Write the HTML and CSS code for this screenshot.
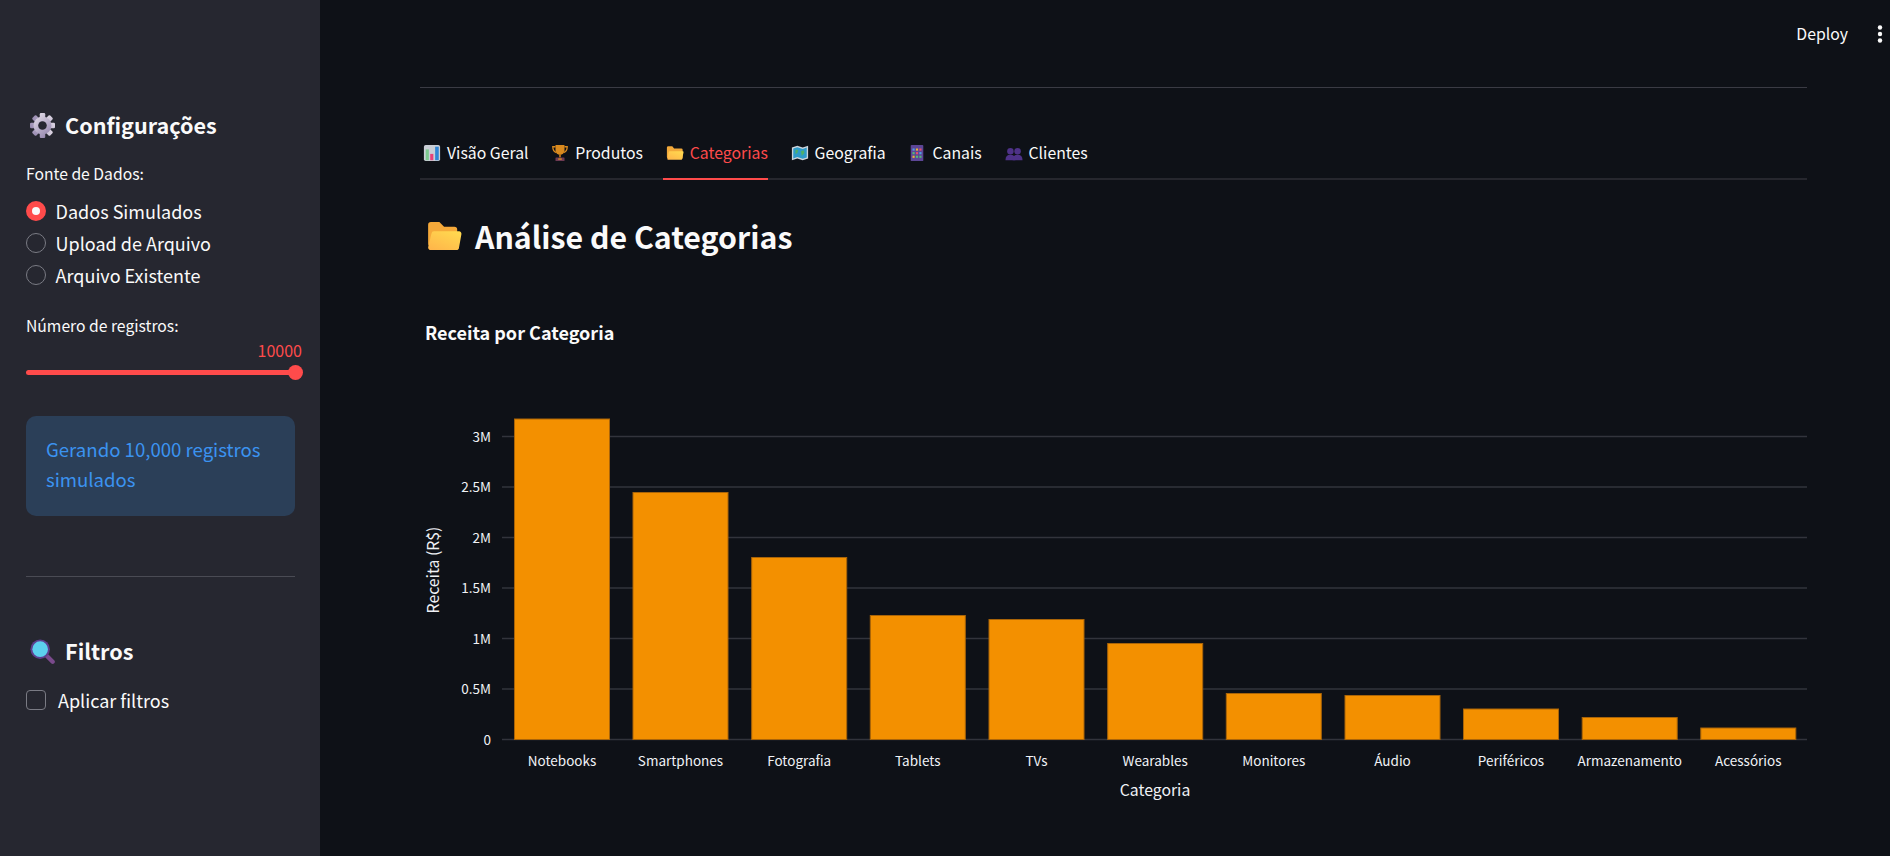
FILE: index.html
```html
<!DOCTYPE html>
<html lang="pt">
<head>
<meta charset="utf-8">
<title>Análise de Categorias</title>
<link rel="stylesheet" href="styles.css">
</head>
<body>
<div class="app">
  <aside class="sidebar">
    <h2 class="side-title">
      <svg class="side-emoji" viewBox="-16 -16 32 32"><defs><linearGradient id="g1" gradientUnits="userSpaceOnUse" x1="-12" y1="-14" x2="12" y2="14"><stop offset="0" stop-color="#e8e2ec"/><stop offset="1" stop-color="#8d7ea8"/></linearGradient></defs><g fill="url(#g1)"><rect x="-3.500" y="-16" width="7" height="32" rx="1.500"/><rect x="-3.500" y="-16" width="7" height="32" rx="1.500" transform="rotate(45)"/><rect x="-3.500" y="-16" width="7" height="32" rx="1.500" transform="rotate(90)"/><rect x="-3.500" y="-16" width="7" height="32" rx="1.500" transform="rotate(135)"/></g><circle r="8.500" fill="none" stroke="url(#g1)" stroke-width="6"/><circle r="5.500" fill="#262730"/></svg>
      <span>Configurações</span>
    </h2>
    <p class="field-label">Fonte de Dados:</p>
    <div class="radio-group">
      <label class="radio"><span class="radio-dot on"></span><span>Dados Simulados</span></label>
      <label class="radio"><span class="radio-dot"></span><span>Upload de Arquivo</span></label>
      <label class="radio"><span class="radio-dot"></span><span>Arquivo Existente</span></label>
    </div>
    <p class="field-label slider-label">Número de registros:</p>
    <div class="slider-value">10000</div>
    <div class="slider"><span class="slider-thumb"></span></div>
    <div class="info-box">Gerando 10,000 registros simulados</div>
    <hr class="side-rule">
    <h2 class="side-title filter-title">
      <svg class="side-emoji" viewBox="0 0 32 32"><line x1="21" y1="21" x2="29" y2="29" stroke="#7a4a8c" stroke-width="5.500" stroke-linecap="round"/><circle cx="13" cy="13" r="12.500" fill="#5d3f8f"/><circle cx="13" cy="13" r="10" fill="#5ccfee"/></svg>
      <span>Filtros</span>
    </h2>
    <label class="check"><span class="check-box"></span><span>Aplicar filtros</span></label>
  </aside>

  <main class="main">
    <header class="topbar">
      <span class="deploy">Deploy</span>
      <svg class="kebab" viewBox="0 0 6 20"><circle cx="3" cy="3.500" r="2.200"/><circle cx="3" cy="10" r="2.200"/><circle cx="3" cy="16.500" r="2.200"/></svg>
    </header>
    <div class="content">
      <hr class="main-rule">
      <nav class="tabs">
        <a class="tab">
          <svg class="tab-emoji" viewBox="0 0 20 20"><rect x="1" y="1" width="18" height="18" rx="2" fill="#c9ced6"/><rect x="3" y="6" width="3.500" height="12" fill="#7cc98f"/><rect x="8" y="11" width="3.500" height="7" fill="#e8407a"/><rect x="13.500" y="3" width="4" height="15" fill="#2f86d6"/></svg>
          <span>Visão Geral</span>
        </a>
        <a class="tab">
          <svg class="tab-emoji" viewBox="0 0 20 20"><path fill="#d98a1e" d="M5 1h10v6a5 5 0 0 1-10 0z"/><path fill="none" stroke="#d98a1e" stroke-width="1.500" d="M5 3H2c0 4 1 5.500 4 6.500M15 3h3c0 4-1 5.500-4 6.500"/><rect x="9" y="11" width="2" height="4" fill="#b8701a"/><rect x="5" y="15" width="10" height="4" rx=".5" fill="#6d3a52"/><rect x="8" y="16" width="4" height="1.500" fill="#d98a1e"/></svg>
          <span>Produtos</span>
        </a>
        <a class="tab active">
          <svg class="tab-emoji" viewBox="0 0 20 20"><path fill="#f2a93b" d="M1 4a1.500 1.500 0 0 1 1.500-1.500H7L9 5h8a1.500 1.500 0 0 1 1.500 1.500V16H2.500A1.500 1.500 0 0 1 1 14.500z"/><path fill="url(#g2)" d="M4 8h14.500a1 1 0 0 1 1 1.200L18 16.500a1 1 0 0 1-1 1H2.500a1 1 0 0 1-1-1.200L3 8.800A1 1 0 0 1 4 8z"/></svg>
          <span>Categorias</span>
        </a>
        <a class="tab">
          <svg class="tab-emoji" viewBox="0 0 20 20"><path fill="#cdd5dd" d="M1 4l6-2 6 2 6-2v14l-6 2-6-2-6 2z"/><path fill="#2f9bc9" d="M2.500 5l4.500-1.500 6 2L17.500 4v11l-4.500 1.500-6-2-4.500 1.500z"/><path fill="#4fb06a" d="M5 6l3 1-1 3-2 1zM11 8l3-1 1 3-3 3z"/></svg>
          <span>Geografia</span>
        </a>
        <a class="tab">
          <svg class="tab-emoji" viewBox="0 0 20 20"><rect x="3" y="1" width="14" height="18" rx="1" fill="#5c4696"/><g fill="#4ea3e6"><rect x="5" y="5" width="2.400" height="2.400"/><rect x="12.600" y="9" width="2.400" height="2.400"/></g><g fill="#e8b43a"><rect x="8.800" y="5" width="2.400" height="2.400"/><rect x="5" y="13" width="2.400" height="2.400"/></g><g fill="#e8506a"><rect x="12.600" y="5" width="2.400" height="2.400"/><rect x="8.800" y="9" width="2.400" height="2.400"/></g><g fill="#55b878"><rect x="5" y="9" width="2.400" height="2.400"/><rect x="8.800" y="13" width="2.400" height="2.400"/><rect x="12.600" y="13" width="2.400" height="2.400"/></g></svg>
          <span>Canais</span>
        </a>
        <a class="tab">
          <svg class="tab-emoji" viewBox="0 0 20 20"><g fill="#4e3288"><circle cx="6" cy="8" r="3.600"/><circle cx="14" cy="8" r="3.600"/><path d="M0.500 18c0-4 2-6 5.500-6s5.500 2 5.500 6z"/><path d="M8.500 18c0-4 2-6 5.500-6s5.500 2 5.500 6z"/></g></svg>
          <span>Clientes</span>
        </a>
      </nav>
      <h1 class="page-title">
        <svg class="title-emoji" viewBox="0 0 36 32"><defs><linearGradient id="g2" x1="0.800" y1="0" x2="0.100" y2="1"><stop offset="0" stop-color="#ffd84f"/><stop offset="1" stop-color="#ffb54a"/></linearGradient></defs><path fill="#f5a93a" d="M0 4a3 3 0 0 1 3-3h9l5 5h11a3 3 0 0 1 3 3v18H3a3 3 0 0 1-3-3z"/><path fill="url(#g2)" d="M7 11h26a2.500 2.500 0 0 1 2.500 3L33 28a3 3 0 0 1-3 3H3a3 3 0 0 1-3-3l3.500-14.500A3 3 0 0 1 7 11z"/></svg>
        <span>Análise de Categorias</span>
      </h1>
      <h3 class="chart-title">Receita por Categoria</h3>
      <svg class="chart" viewBox="420 380 1387 440" width="1387" height="440">
        <g class="grid">
          <line x1="502" x2="1807" y1="739.500" y2="739.500"/>
          <line x1="502" x2="1807" y1="689" y2="689"/>
          <line x1="502" x2="1807" y1="638.500" y2="638.500"/>
          <line x1="502" x2="1807" y1="588" y2="588"/>
          <line x1="502" x2="1807" y1="537.500" y2="537.500"/>
          <line x1="502" x2="1807" y1="487" y2="487"/>
          <line x1="502" x2="1807" y1="436.500" y2="436.500"/>
        </g>
        <g class="bars">
          <rect x="514.500" y="419" width="95" height="320.500"/>
          <rect x="633" y="492.500" width="95" height="247"/>
          <rect x="751.700" y="557.500" width="95" height="182"/>
          <rect x="870.300" y="615.500" width="95" height="124"/>
          <rect x="989" y="619.500" width="95" height="120"/>
          <rect x="1107.700" y="643.500" width="95" height="96"/>
          <rect x="1226.300" y="693.500" width="95" height="46"/>
          <rect x="1345" y="695.500" width="95" height="44"/>
          <rect x="1463.500" y="709" width="95" height="30.500"/>
          <rect x="1582.200" y="717.500" width="95" height="22"/>
          <rect x="1700.800" y="728" width="95" height="11.500"/>
        </g>
        <g class="ticks y-ticks">
          <text x="491" y="744.500">0</text>
          <text x="491" y="694">0.5M</text>
          <text x="491" y="643.500">1M</text>
          <text x="491" y="593">1.5M</text>
          <text x="491" y="542.500">2M</text>
          <text x="491" y="492">2.5M</text>
          <text x="491" y="441.500">3M</text>
        </g>
        <g class="ticks x-ticks">
          <text x="562" y="766">Notebooks</text>
          <text x="680.500" y="766">Smartphones</text>
          <text x="799.200" y="766">Fotografia</text>
          <text x="917.800" y="766">Tablets</text>
          <text x="1036.500" y="766">TVs</text>
          <text x="1155.200" y="766">Wearables</text>
          <text x="1273.800" y="766">Monitores</text>
          <text x="1392.500" y="766">Áudio</text>
          <text x="1511" y="766">Periféricos</text>
          <text x="1629.700" y="766">Armazenamento</text>
          <text x="1748.300" y="766">Acessórios</text>
        </g>
        <text class="axis-title" x="1155" y="796">Categoria</text>
        <text class="axis-title" transform="translate(439 570) rotate(-90)">Receita (R$)</text>
      </svg>
    </div>
  </main>
</div>
</body>
</html>
```
FILE: styles.css
```css
* { box-sizing: border-box; }
html, body { margin: 0; height: 100%; }
body {
  background: #0e1117;
  color: #fafafa;
  font-family: "Noto Sans CJK SC", "Noto Sans CJK JP", "Noto Sans", sans-serif;
  overflow: hidden;
}
.app { display: flex; height: 856px; }

.sidebar {
  flex: 0 0 320px;
  min-width: 0;
  background: #262730;
  padding: 106px 26px 0;
  display: flex;
  flex-direction: column;
}
.side-title {
  display: flex;
  align-items: center;
  gap: 10px;
  margin: 0 0 0 4px;
  height: 38px;
  font-size: 21.600px;
  font-weight: 600;
  line-height: 38px;
}
.side-emoji { width: 25px; height: 25px; flex: none; }
.field-label { margin: 18px 0 0; font-size: 15.700px; line-height: 24px; }
.radio-group { display: flex; flex-direction: column; gap: 4px; margin-top: 11px; }
.radio { display: flex; align-items: center; gap: 9.600px; height: 28px; font-size: 18px; }
.radio-dot {
  width: 20px; height: 20px; border-radius: 50%;
  border: 1.500px solid #7a7b84; background: #262730; flex: none;
}
.radio-dot.on { background: #ff4b4b; border: 6px solid #ff4b4b; position: relative; }
.radio-dot.on::after {
  content: ""; position: absolute; inset: 0; background: #fafafa; border-radius: 50%;
}
.slider-label { margin-top: 25px; }
.slider-value { margin: 0 -8px 0 0; height: 24px; text-align: right; color: #ff4b4b; font-size: 16px; line-height: 24px; }
.slider { position: relative; height: 5px; margin-top: 8px; background: #ff4b4b; border-radius: 3px; width: 269px; }
.slider-thumb {
  position: absolute; right: -8px; top: -5px; width: 15px; height: 15px;
  background: #ff4b4b; border-radius: 50%;
}
.info-box {
  margin-top: 41px;
  width: 269px;
  height: 100px;
  padding: 18px 20px;
  background: #2b3f58;
  border-radius: 10px;
  color: #3b93f0;
  font-size: 18.600px;
  line-height: 30px;
}
.side-rule { width: 269px; margin: 60px 0 0; border: 0; border-top: 1px solid #4a4b54; }
.filter-title { margin-top: 55px; }
.check { display: flex; align-items: center; gap: 12px; margin-top: 16px; height: 28px; font-size: 18px; }
.check-box { width: 20px; height: 20px; border: 1.500px solid #7a7b84; border-radius: 4px; flex: none; }

.main { flex: 1; min-width: 0; display: flex; flex-direction: column; }
.topbar { height: 67px; display: flex; align-items: center; justify-content: flex-end; padding: 0 7px 0 0; }
.deploy { font-size: 15.800px; margin-right: 29px; }
.kebab { width: 6px; height: 20px; fill: #fafafa; }
.content { padding: 20px 83px 0 100px; }
.main-rule { margin: 0; border: 0; border-top: 1px solid #3a3b44; }
.tabs {
  display: flex;
  gap: 19.800px;
  margin-top: 44px;
  height: 48px;
  border-bottom: 2px solid #26272e;
}
.tab {
  display: flex;
  align-items: center;
  gap: 6px;
  height: 48px;
  padding: 0 0 7px 3px;
  font-size: 15.800px;
}
.tab-emoji { width: 18px; height: 18px; flex: none; }
.tab.active { color: #ff4b4b; border-bottom: 2px solid #ff4b4b; padding-bottom: 5px; }
.page-title {
  display: flex;
  align-items: center;
  gap: 13px;
  margin: 33px 0 0 8px;
  height: 46px;
  font-size: 30.300px;
  font-weight: 600;
  line-height: 46px;
}
.title-emoji { width: 34px; height: 30px; flex: none; }
.chart-title { margin: 59px 0 0 5px; height: 28px; font-size: 18px; font-weight: 700; line-height: 28px; }
.chart { display: block; margin-top: 34px; }
.grid line { stroke: #32343c; stroke-width: 1.500; }
.bars rect { fill: #f39000; stroke: #a96408; stroke-width: 1; }
.ticks text { fill: #f0f2f6; font-size: 13.500px; }
.y-ticks text { text-anchor: end; }
.x-ticks text { text-anchor: middle; }
.axis-title { fill: #f0f2f6; font-size: 15.800px; text-anchor: middle; }
```
